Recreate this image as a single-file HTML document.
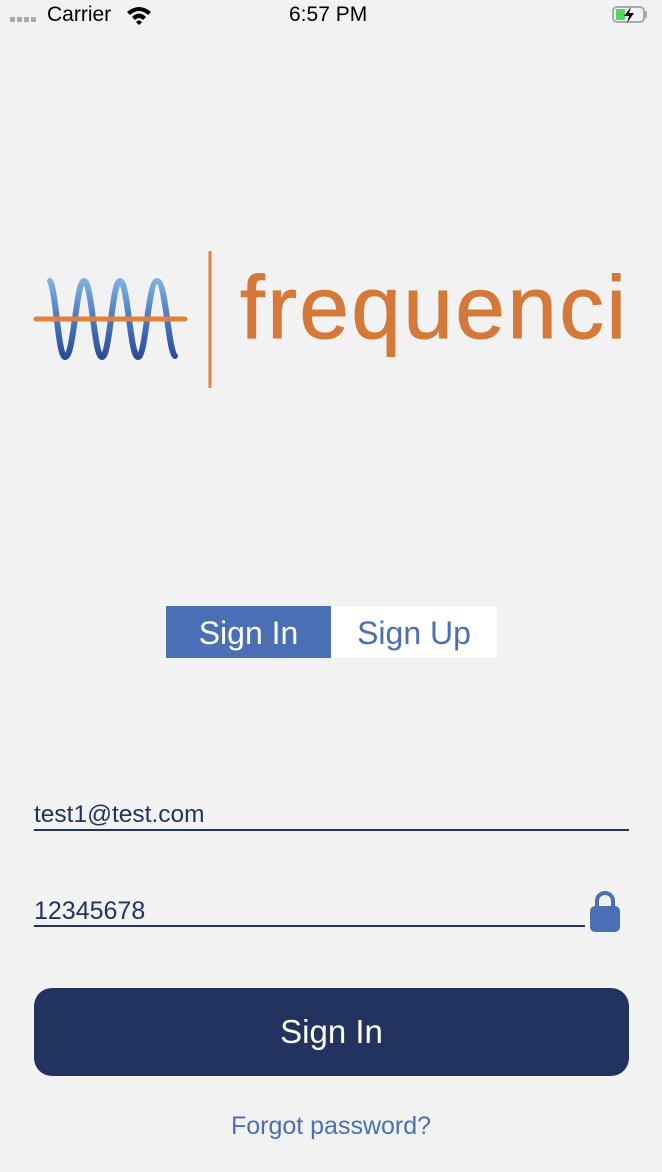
<!DOCTYPE html>
<html><head><meta charset="utf-8"><style>
body{margin:0;width:662px;height:1172px;background:#f2f2f2;font-family:"Liberation Sans",sans-serif;position:relative;overflow:hidden}
.a{position:absolute}
</style></head><body>
<div class="a" style="left:10px;top:17px;width:27px;height:5px;background:repeating-linear-gradient(90deg,#aaa 0 5px,transparent 5px 7px)"></div>
<div class="a" style="left:47px;top:3px;font-size:21px;color:#000">Carrier</div>
<svg class="a" style="left:126px;top:5px" width="26" height="20" viewBox="0 0 26 20"><path d="M1 7 Q13 -3 25 7 L22 10 Q13 2 4 10Z M6 12 Q13 5 20 12 L17 15 Q13 11 9 15Z M10 17 L13 20 L16 17 Q13 14 10 17Z" fill="#000"/></svg>
<div class="a" style="left:289px;top:3px;font-size:21px;color:#000">6:57 PM</div>
<div class="a" style="left:612px;top:6px;width:33px;height:17px;border:2px solid #aaa;border-radius:5px;box-sizing:border-box"></div>
<div class="a" style="left:645px;top:11px;width:2px;height:7px;background:#aaa"></div>
<div class="a" style="left:616px;top:9px;width:9px;height:11px;background:#4cd964;border-radius:1px"></div>
<svg class="a" style="left:622px;top:7px" width="14" height="16" viewBox="0 0 14 16"><path d="M9 0 L2 9 H7 L5 16 L12 6 H7Z" fill="#000"/></svg>

<svg class="a" style="left:0;top:240px" width="230" height="160" viewBox="0 240 230 160">
<defs><linearGradient id="g" x1="0" y1="0" x2="0" y2="1"><stop offset="0" stop-color="#7fb0e0"/><stop offset="0.5" stop-color="#4a78bf"/><stop offset="1" stop-color="#2c4d96"/></linearGradient></defs>
<path d="M50 281 C56 290 58 356 65 357 C74 358 76 281 84 281 C92 281 94 357 102 357 C110 357 112 281 120 281 C128 281 130 357 138 357 C146 357 148 281 157 281 C166 281 168 350 175 356" fill="none" stroke="url(#g)" stroke-width="6" stroke-linecap="round"/>
<line x1="36" y1="319" x2="185" y2="319" stroke="#e0823c" stroke-width="5" stroke-linecap="round"/>
<line x1="210" y1="251" x2="210" y2="388" stroke="#e0823c" stroke-width="3"/>
</svg>
<div class="a" style="left:240px;top:252px;font-size:89px;color:#d4793a;letter-spacing:2.5px;line-height:110px;-webkit-text-stroke:1px #d4793a">frequenci</div>

<div class="a" style="left:166px;top:606px;width:165px;height:52px;background:#4a6fb5;color:#fff;font-size:32px;line-height:54px;text-align:center">Sign In</div>
<div class="a" style="left:331px;top:606px;width:166px;height:52px;background:#fff;color:#4a6fb5;font-size:32px;line-height:54px;text-align:center">Sign Up</div>

<div class="a" style="left:34px;top:801px;font-size:24.5px;color:#22335f">test1@test.com</div>
<div class="a" style="left:34px;top:829px;width:595px;height:2px;background:#22335f"></div>
<div class="a" style="left:34px;top:897px;font-size:25px;color:#22335f">12345678</div>
<div class="a" style="left:34px;top:925px;width:551px;height:2px;background:#22335f"></div>
<svg class="a" style="left:588px;top:889px" width="34" height="44" viewBox="0 0 34 44"><path d="M9 19 V12 A8 8 0 0 1 25 12 V19" fill="none" stroke="#4a6fb5" stroke-width="4"/><rect x="2" y="17" width="30" height="26" rx="5" fill="#4a6fb5"/></svg>

<div class="a" style="left:34px;top:988px;width:595px;height:88px;background:#22335f;border-radius:18px;color:#fff;font-size:33px;line-height:88px;text-align:center">Sign In</div>
<div class="a" style="left:0;top:1112px;width:662px;text-align:center;font-size:25px;color:#4a6fb5">Forgot password?</div>
</body></html>
